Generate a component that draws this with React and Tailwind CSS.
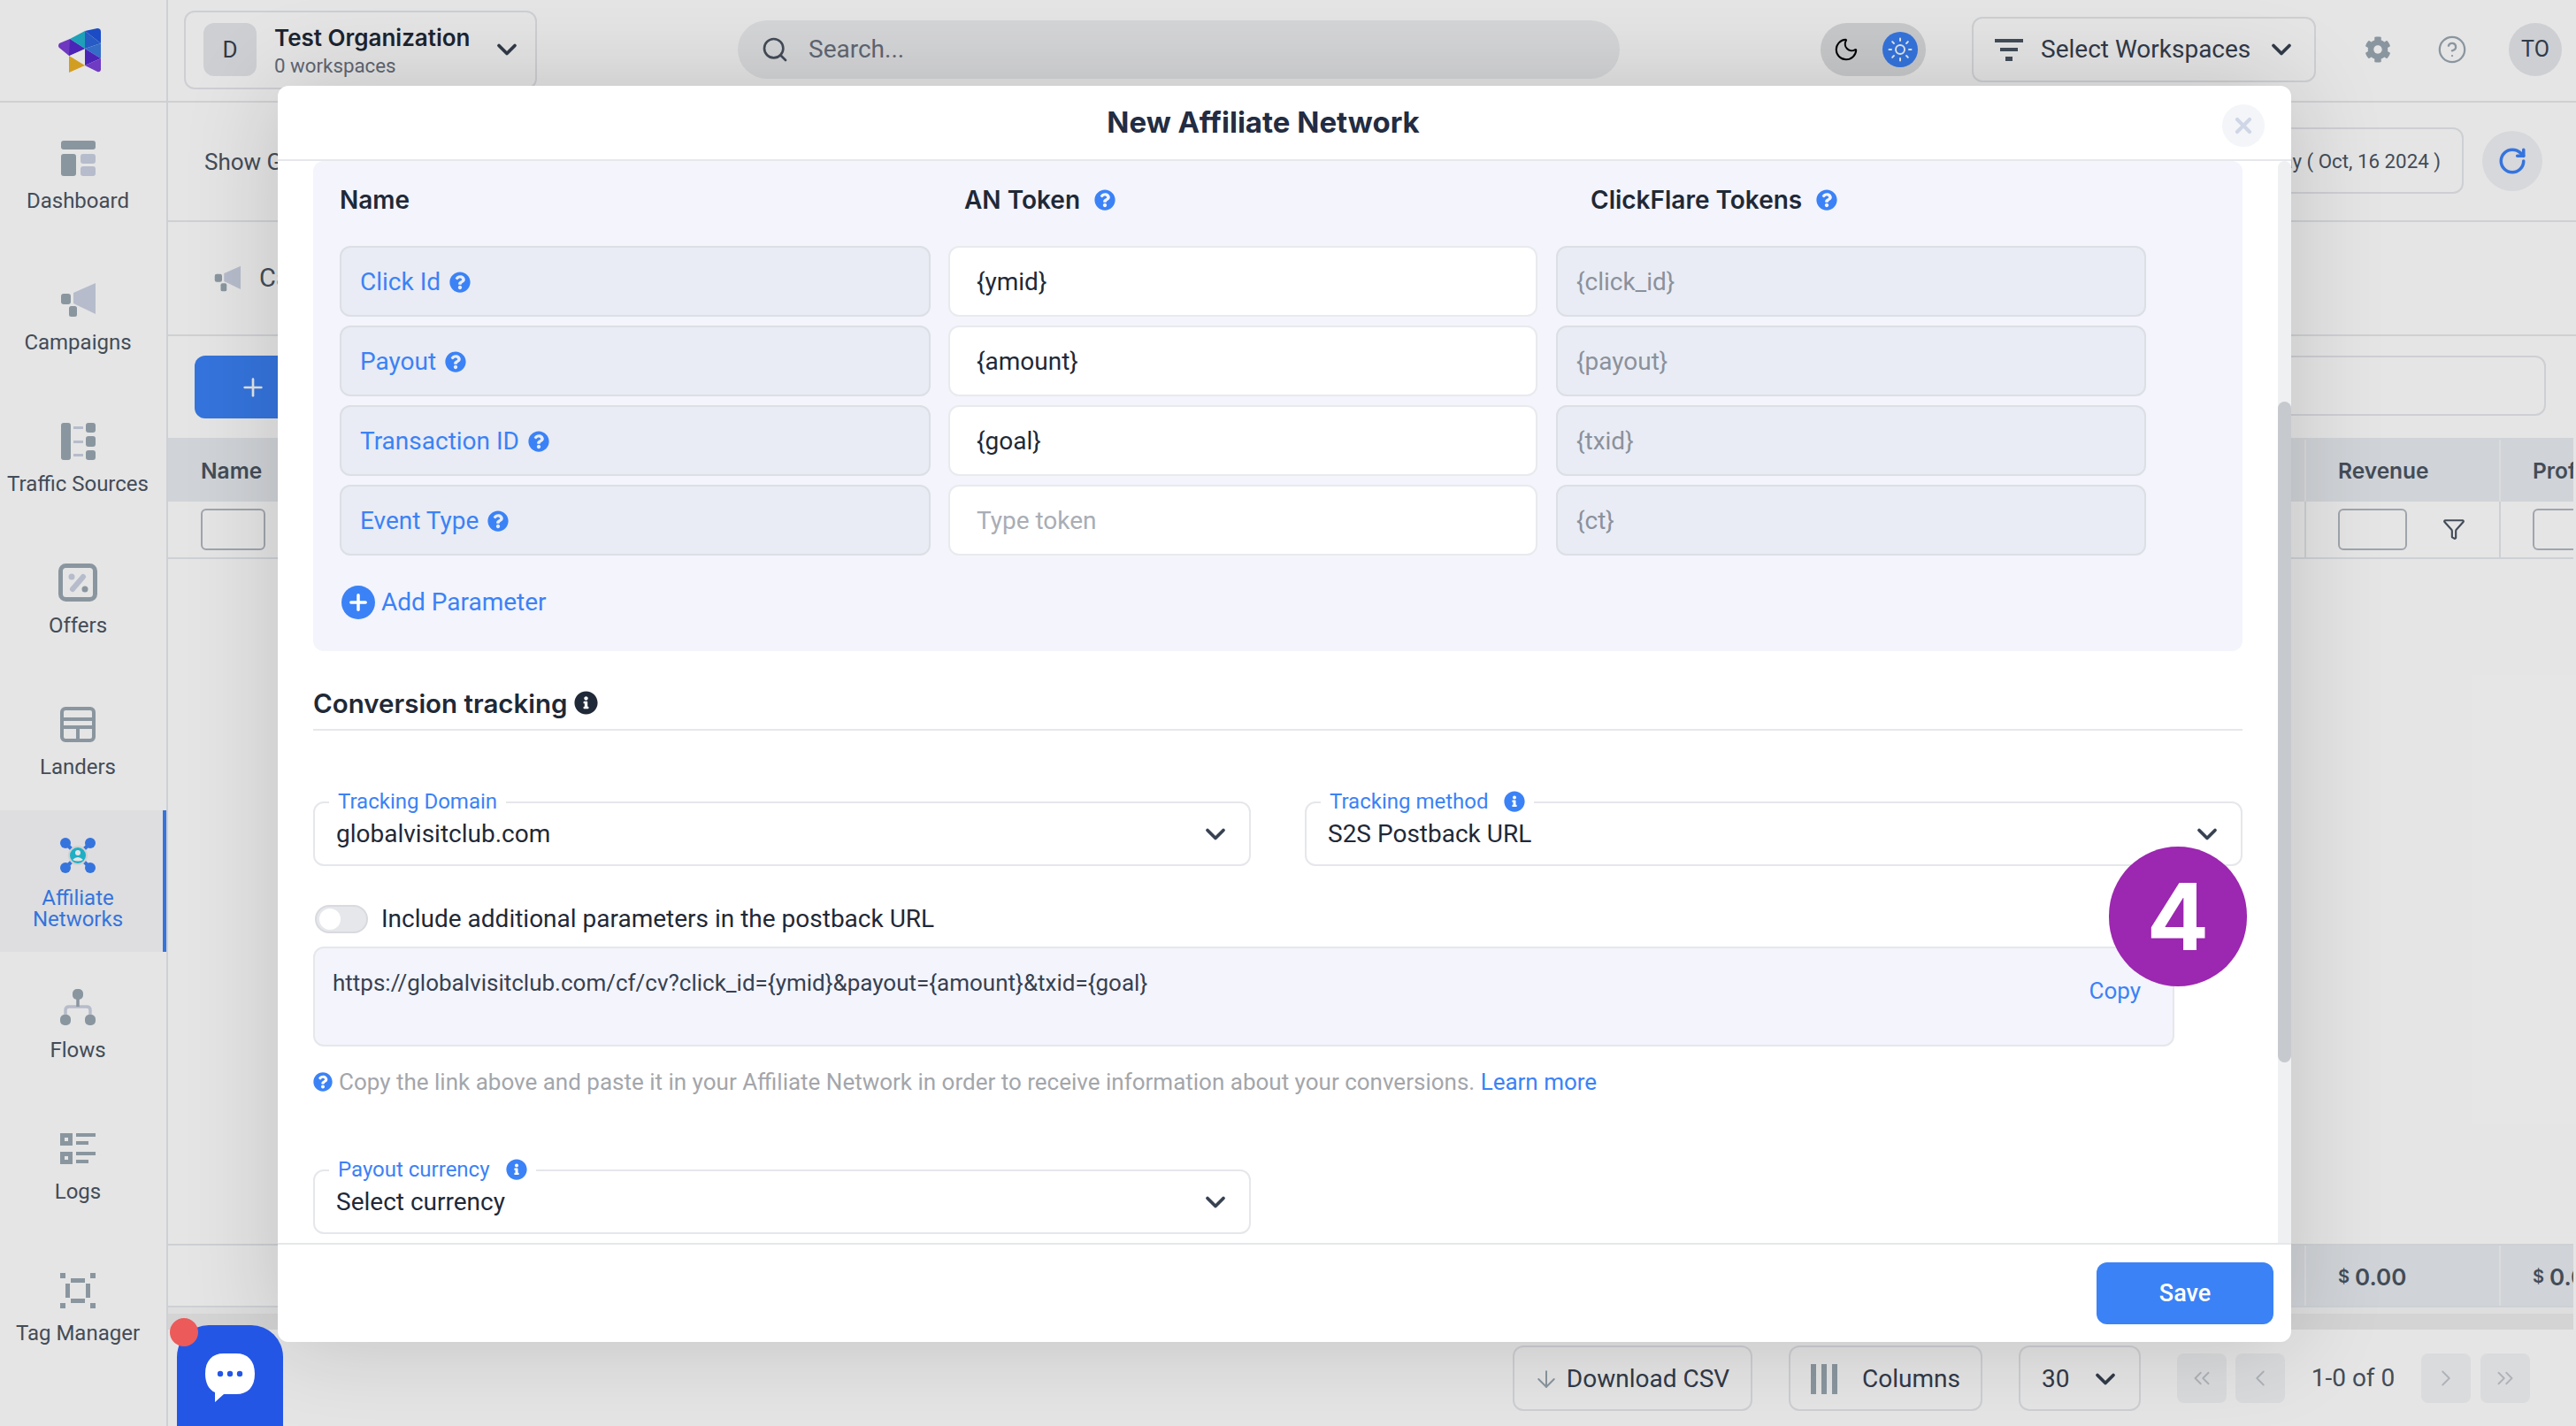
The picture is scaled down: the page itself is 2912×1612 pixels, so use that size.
import { ArrowDown, ChevronDown, ChevronLeft, ChevronRight, ChevronsLeft, ChevronsRight, CircleHelp, Funnel, Moon, Plus, RotateCw, Search, Sun, X } from 'lucide-react';
import { FaCog, FaInfoCircle, FaQuestionCircle } from 'react-icons/fa';

const dark = '#9aa7b2';
const light = '#cbd2e3';

const DashboardIcon = () => (
  <svg width="40" height="40" viewBox="0 0 40 40">
    <rect x="1" y="0" width="39" height="10" rx="3" fill={dark} />
    <rect x="1" y="15" width="17" height="25" rx="3" fill={dark} />
    <rect x="23" y="15" width="17" height="11" rx="3" fill={light} />
    <rect x="23" y="29" width="17" height="11" rx="3" fill={light} />
  </svg>
);

const CampaignsIcon = () => (
  <svg width="40" height="40" viewBox="0 0 40 40">
    <path d="M15 12 L40 1 V36 L15 24 Z" fill={light} />
    <rect x="1" y="13" width="11" height="12" rx="3" fill={dark} />
    <rect x="10" y="27" width="9" height="12" rx="2.5" fill={dark} />
  </svg>
);

const TrafficIcon = () => (
  <svg width="40" height="42" viewBox="0 0 40 42">
    <rect x="1" y="0" width="11" height="42" rx="3" fill={dark} />
    <rect x="29" y="0" width="11" height="11" rx="3" fill={dark} />
    <rect x="29" y="15" width="11" height="12" rx="3" fill={dark} />
    <rect x="29" y="31" width="11" height="11" rx="3" fill={dark} />
    <rect x="15" y="4" width="11" height="3" fill={light} />
    <rect x="15" y="20" width="11" height="3" fill={light} />
    <rect x="15" y="35" width="11" height="3" fill={light} />
  </svg>
);

const OffersIcon = () => (
  <svg width="44" height="44" viewBox="0 0 44 44">
    <rect x="2.5" y="2.5" width="39" height="38" rx="6" fill="none" stroke={dark} strokeWidth="5" />
    <circle cx="15" cy="15" r="3.5" fill={light} />
    <circle cx="30" cy="29" r="3.5" fill={dark} />
    <path d="M16 29 L28 15" stroke={light} strokeWidth="6" strokeLinecap="round" />
  </svg>
);

const LandersIcon = () => (
  <svg width="40" height="40" viewBox="0 0 40 40">
    <rect x="2" y="2" width="36" height="36" rx="4" fill="none" stroke={dark} strokeWidth="4" />
    <path d="M2 14 H38 M2 23 H38 M20 23 V38" stroke={dark} strokeWidth="4" />
  </svg>
);

const NetworksIcon = () => (
  <svg width="40" height="40" viewBox="0 0 40 40">
    <path d="M8 8 L32 32 M32 8 L8 32" stroke="#3b82f6" strokeWidth="4" />
    <circle cx="6" cy="6" r="6" fill="#3b82f6" />
    <circle cx="34" cy="6" r="6" fill="#3b82f6" />
    <circle cx="6" cy="34" r="6" fill="#3b82f6" />
    <circle cx="34" cy="34" r="6" fill="#3b82f6" />
    <circle cx="20" cy="20" r="10" fill="#22c3dc" stroke="#e8e8ea" strokeWidth="2" />
    <circle cx="20" cy="17" r="3" fill="#fff" />
    <path d="M14 25 Q20 19 26 25 Q20 28 14 25 Z" fill="#fff" />
  </svg>
);

const FlowsIcon = () => (
  <svg width="40" height="41" viewBox="0 0 40 41">
    <path d="M6 30 V24 Q6 20 10 20 H30 Q34 20 34 24 V30" fill="none" stroke={light} strokeWidth="3.5" />
    <path d="M20 8 V20" stroke={dark} strokeWidth="3.5" />
    <rect x="14" y="0" width="12" height="12" rx="5" fill={dark} />
    <rect x="0" y="29" width="12" height="12" rx="5" fill={dark} />
    <rect x="28" y="29" width="12" height="12" rx="5" fill={dark} />
  </svg>
);

const LogsIcon = () => (
  <svg width="40" height="35" viewBox="0 0 40 35">
    <path d="M0 0 H14 V14 H0 Z M5 5 V9 H9 V5 Z M0 21 H14 V35 H0 Z M5 26 V30 H9 V26 Z" fill={dark} fillRule="evenodd" />
    <path d="M18 0 H40 V4 H18 Z M18 9 H32 V13 H18 Z M18 21 H40 V25 H18 Z M18 30 H32 V34 H18 Z" fill={dark} />
  </svg>
);

const TagIcon = () => (
  <svg width="40" height="40" viewBox="0 0 40 40">
    <path d="M0 0 H6 V6 H0 Z M34 0 H40 V6 H34 Z M0 34 H6 V40 H0 Z M34 34 H40 V40 H34 Z" fill={dark} />
    <path d="M12 6 H28 V11 H12 Z M12 29 H28 V34 H12 Z M6 12 H11 V28 H6 Z M29 12 H34 V28 H29 Z" fill={dark} />
  </svg>
);

const Logo = () => (
  <svg width="48" height="50" viewBox="0 0 48 50">
    <path d="M1 17 Q-1 20 1 22 L12 31 L30 23 L13 12 Z" fill="#7c3fd6" />
    <path d="M13 12 L30 23 L12 31 Z" fill="#5427cc" />
    <path d="M13 12 L30 3 V23 Z" fill="#22b3cf" />
    <path d="M30 3 L44 0 Q48 0 48 4 V17 Z" fill="#1f55dc" />
    <path d="M30 3 L48 17 L30 23 Z" fill="#2b66dc" />
    <path d="M30 23 L48 17 V34 Z" fill="#3a7ade" />
    <path d="M30 23 L48 34 L30 42 Z" fill="#5427cc" />
    <path d="M48 34 V47 Q47 50 44 49 L30 42 Z" fill="#7c42d8" />
    <path d="M12 31 L30 42 L12 50 Z" fill="#eab026" />
  </svg>
);

const navItems = [
  { label: 'Dashboard', icon: <DashboardIcon /> },
  { label: 'Campaigns', icon: <CampaignsIcon /> },
  { label: 'Traffic Sources', icon: <TrafficIcon /> },
  { label: 'Offers', icon: <OffersIcon /> },
  { label: 'Landers', icon: <LandersIcon /> },
  { label: 'Affiliate Networks', icon: <NetworksIcon />, active: true },
  { label: 'Flows', icon: <FlowsIcon /> },
  { label: 'Logs', icon: <LogsIcon /> },
  { label: 'Tag Manager', icon: <TagIcon /> },
];

const params = [
  { name: 'Click Id', token: '{ymid}', cf: '{click_id}' },
  { name: 'Payout', token: '{amount}', cf: '{payout}' },
  { name: 'Transaction ID', token: '{goal}', cf: '{txid}' },
  { name: 'Event Type', token: '', cf: '{ct}' },
];

function NavItem({ item }) {
  return (
    <div
      className={`flex h-[160px] flex-col items-center justify-center gap-4 pt-[5px] ${
        item.active ? 'border-r-4 border-[#3b82f6] bg-[#f8f8fa] pr-2 text-[#3b82f6]' : 'pr-3 text-[#4b5563]'
      }`}
    >
      <div className="flex h-10 items-center justify-center">{item.icon}</div>
      <div className={`text-center text-[24px] leading-6 ${item.active ? 'w-[130px]' : ''}`}>{item.label}</div>
    </div>
  );
}

function ParamRow({ param }) {
  return (
    <div className="flex">
      <div className="flex h-20 w-[668px] items-center gap-[10px] rounded-xl border-2 border-[#dcdfe4] bg-[#e9ecf4] pl-[21px] pt-[1px] text-[28px] text-[#3b82f6]">
        {param.name}
        <FaQuestionCircle size={24} />
      </div>
      <div className="ml-5 flex h-20 w-[666px] items-center rounded-xl border-2 border-[#e8eaee] bg-white pl-[30px] pt-[1px] text-[28px] text-[#1f2937]">
        {param.token || <span className="text-[#a9adb5]">Type token</span>}
      </div>
      <div className="ml-[21px] flex h-20 w-[667px] items-center rounded-xl border-2 border-[#dcdfe4] bg-[#e9ecf4] pl-[21px] pt-[1px] text-[28px] text-[#8b919c]">
        {param.cf}
      </div>
    </div>
  );
}

function SelectField({ label, value, info, className = '' }) {
  return (
    <div className={`relative flex h-[73px] items-center justify-between rounded-xl border-2 border-[#e5e7eb] bg-white pl-6 pr-[20px] ${className}`}>
      <div className="absolute -top-[14px] left-[16px] flex h-6 items-center gap-[18px] bg-white px-[10px] text-[24px] leading-6 text-[#3b82f6]">
        {label}
        {info && <FaInfoCircle size={24} />}
      </div>
      <span className="text-[28px] text-[#1f2937]">{value}</span>
      <ChevronDown size={36} strokeWidth={2.5} className="text-[#374151]" />
    </div>
  );
}

function Pager({ children }) {
  return <div className="flex h-14 w-14 items-center justify-center rounded-lg bg-[#f3f4f6] text-[#c3c7cd]">{children}</div>;
}

function Modal() {
  return (
    <div className="absolute inset-0 bg-black/10 pl-[314px] pt-[97px]">
      <div className="flex h-[1420px] w-[2276px] flex-col overflow-hidden rounded-xl bg-white shadow-[0_0_110px_rgba(0,0,0,0.16)]">
        <div className="flex h-[85px] shrink-0 items-center justify-between border-b-2 border-[#e5e7eb] pr-[30px]">
          <div className="w-[2228px] pl-[30px] text-center font-['Inter',sans-serif] text-[33px] font-bold text-[#232c42]">New Affiliate Network</div>
          <div className="mt-[6px] flex h-12 w-12 shrink-0 items-center justify-center rounded-full bg-[#f3f5f9] text-[#cfd6e6]">
            <X size={28} strokeWidth={3.5} />
          </div>
        </div>

        <div className="flex h-[1223px] overflow-hidden">
          <div className="w-[2261px] pl-10 pr-10">
            <div className="rounded-xl bg-[#f3f4fc] pb-[36px] pl-[30px]">
              <div className="mb-[10px] flex h-[86px] items-center pt-[2px] font-['Inter',sans-serif] text-[28px] font-semibold text-[#1f2937]">
                <div className="w-[706px]">Name</div>
                <div className="flex w-[708px] items-center gap-[16px]">
                  AN Token
                  <FaQuestionCircle size={24} className="text-[#3b82f6]" />
                </div>
                <div className="flex items-center gap-[16px]">
                  ClickFlare Tokens
                  <FaQuestionCircle size={24} className="text-[#3b82f6]" />
                </div>
              </div>
              <div className="flex flex-col gap-[10px]">
                {params.map((param) => (
                  <ParamRow key={param.name} param={param} />
                ))}
              </div>
              <div className="mt-[34px] flex h-[38px] items-center gap-[7px] pl-[2px] text-[28px] text-[#3b82f6]">
                <div className="flex h-[38px] w-[38px] items-center justify-center rounded-full bg-[#3b82f6] text-white">
                  <Plus size={28} strokeWidth={3} />
                </div>
                Add Parameter
              </div>
            </div>

            <div className="mt-[34px] flex h-[56px] items-start gap-[7px] border-b-2 border-[#e5e7eb] pt-[3px] font-['Inter',sans-serif] text-[29.5px] font-semibold leading-[44px] text-[#1f2937]">
              Conversion tracking
              <FaInfoCircle size={27} className="mt-[8px]" />
            </div>

            <div className="mt-[80px] grid w-[2181px] grid-cols-2 gap-[61px]">
              <SelectField label="Tracking Domain" value="globalvisitclub.com" />
              <SelectField label="Tracking method" value="S2S Postback URL" info />
            </div>

            <div className="mt-[43px] flex h-8 items-center gap-[15px] pl-[2px] pt-[1px] text-[28px] text-[#1f2937]">
              <div className="flex h-8 w-[60px] items-center rounded-full border-2 border-[#d8dadf] bg-[#e5e7eb] pl-[3px]">
                <div className="h-6 w-6 rounded-full bg-white" />
              </div>
              Include additional parameters in the postback URL
            </div>

            <div className="mt-4 flex h-[113px] w-[2104px] justify-between rounded-xl border-2 border-[#e5e7eb] bg-[#f3f4fc] pl-[20px] pr-[36px] text-[26px]">
              <span className="pt-[20px] text-[#374151]">https://globalvisitclub.com/cf/cv?click_id={'{ymid}'}&amp;payout={'{amount}'}&amp;txid={'{goal}'}</span>
              <span className="pt-[29px] text-[#3b82f6]">Copy</span>
            </div>

            <div className="mt-[25px] flex h-[30px] items-center gap-[7px] text-[26px] text-[#a3a6ab]">
              <FaQuestionCircle size={22} className="text-[#3b82f6]" />
              <span>
                Copy the link above and paste it in your Affiliate Network in order to receive information about your conversions.{' '}
                <span className="text-[#3b82f6]">Learn more</span>
              </span>
            </div>

            <SelectField className="mt-[84px] w-[1060px]" label="Payout currency" value="Select currency" info />
          </div>
          <div className="w-[15px] rounded-t-lg bg-[#eef0f2] pt-[272px]">
            <div className="h-[747px] rounded-full bg-[#c6c9ce]" />
          </div>
        </div>

        <div className="flex h-[112px] shrink-0 items-center justify-end border-t-2 border-[#e5e7eb] pr-[20px]">
          <div className="flex h-[70px] w-[200px] items-center justify-center rounded-xl bg-[#3b82f6] text-[27px] font-medium text-white">Save</div>
        </div>
      </div>
    </div>
  );
}

export default function App() {
  return (
    <div className="relative flex h-[1612px] w-[2912px] overflow-hidden bg-white font-['Roboto',sans-serif] text-[#1f2937]">
      <aside className="w-[190px] shrink-0 border-r-2 border-[#e5e8ec]">
        <div className="flex h-[116px] items-center justify-center border-b-2 border-[#e5e8ec] pr-[8px]">
          <Logo />
        </div>
        {navItems.map((item) => (
          <NavItem key={item.label} item={item} />
        ))}
      </aside>

      <main className="flex min-w-0 flex-1 flex-col">
        <header className="flex h-[116px] shrink-0 items-center border-b-2 border-[#e5e8ec] pb-[2px] pl-[18px] pr-[16px]">
          <div className="flex h-[89px] w-[399px] items-center rounded-xl border-2 border-[#e5e7eb] pl-[20px]">
            <div className="flex h-[60px] w-[60px] items-center justify-center rounded-xl bg-[#e5e7eb] text-[26px] text-[#374151]">D</div>
            <div className="ml-[20px] w-[245px] pt-[1px]">
              <div className="font-['Inter',sans-serif] text-[26px] font-semibold leading-[34px] text-[#1f2937]">Test Organization</div>
              <div className="text-[22.3px] leading-[28px] text-[#6b7280]">0 workspaces</div>
            </div>
            <ChevronDown size={36} strokeWidth={2.5} className="text-[#374151]" />
          </div>
          <div className="ml-[227px] flex h-[66px] w-[997px] items-center gap-[22px] rounded-full bg-[#eeeff1] pl-[26px] text-[28px] text-[#6b7280]">
            <Search size={32} strokeWidth={2} className="text-[#4b5563]" />
            Search...
          </div>
          <div className="ml-[227px] flex h-[60px] w-[119px] items-center gap-[26px] rounded-full bg-[#dfe0e3] pl-[14px]">
            <Moon size={30} strokeWidth={1.6} className="text-black" />
            <div className="flex h-10 w-10 items-center justify-center rounded-full bg-[#3b82f6] text-white">
              <Sun size={30} strokeWidth={1.6} />
            </div>
          </div>
          <div className="ml-[52px] flex h-[74px] w-[389px] items-center rounded-xl border-2 border-[#e5e7eb] pl-[24px] text-[28px] text-[#374151]">
            <svg width="32" height="28" viewBox="0 0 32 28" className="mr-[20px]">
              <path d="M0 2 H32 V6 H0 Z M6 12 H26 V16 H6 Z M12 22 H20 V27 H12 Z" fill="#4b5563" />
            </svg>
            Select Workspaces
            <ChevronDown size={36} strokeWidth={2.5} className="ml-[17px]" />
          </div>
          <FaCog size={30} className="ml-[55px] text-[#9aa7b2]" />
          <CircleHelp size={34} strokeWidth={1.6} className="ml-[52px] text-[#9aa7b2]" />
          <div className="ml-[47px] flex h-[60px] w-[60px] items-center justify-center rounded-full bg-[#e5e7eb] text-[25px] text-[#374151]">TO</div>
        </header>

        <div className="flex h-[135px] shrink-0 items-center justify-between border-b-2 border-[#e5e8ec] pb-[2px] pl-[41px] pr-[38px] text-[26px] text-[#4b5563]">
          <span className="pt-[4px]">Show Groups</span>
          <div className="flex items-center gap-[21px]">
            <div className="flex h-[75px] w-[480px] items-center justify-end rounded-xl border-2 border-[#e5e7eb] pr-[24px] pt-[3px] text-[22.3px] text-[#4b5563]">Today ( Oct, 16 2024 )</div>
            <div className="flex h-[68px] w-[68px] items-center justify-center rounded-full bg-[#f0f1f5] text-[#3b82f6]">
              <RotateCw size={34} strokeWidth={2.5} />
            </div>
          </div>
        </div>

        <div className="flex h-[129px] shrink-0 items-center gap-[20px] border-b-2 border-[#e5e8ec] pl-[51px] text-[29px] text-[#4b5563]">
          <svg width="32" height="30" viewBox="0 0 40 40">
            <path d="M15 12 L40 1 V36 L15 24 Z" fill={light} />
            <rect x="1" y="13" width="11" height="12" rx="3" fill={dark} />
            <rect x="10" y="27" width="9" height="12" rx="2.5" fill={dark} />
          </svg>
          Campaigns
        </div>

        <div className="flex h-[115px] shrink-0 items-start justify-between pl-[30px] pr-[34px] pt-[22px]">
          <div className="flex h-[71px] w-[160px] items-center rounded-xl bg-[#3b82f6] pl-[50px] text-white">
            <Plus size={32} strokeWidth={2} />
          </div>
          <div className="h-[68px] w-[600px] rounded-xl border-2 border-[#e5e7eb]" />
        </div>

        <div className="flex min-h-0 flex-1 flex-col pr-[3px]">
          <div className="flex h-[72px] shrink-0 bg-[#e8ebf0] pt-[2px] font-['Inter',sans-serif] text-[24.5px] font-semibold text-[#4b5563]">
            <div className="flex flex-1 items-center pl-[37px]">Name</div>
            <div className="flex w-[220px] items-center border-l-2 border-[#f3f4f6] pl-[36px]">Revenue</div>
            <div className="flex w-[84px] items-center overflow-hidden border-l-2 border-[#f3f4f6] pl-[36px]">Profit</div>
          </div>
          <div className="flex h-[65px] shrink-0 border-b-2 border-[#e5e8ec]">
            <div className="flex-1 pl-[37px] pt-[8px]">
              <div className="h-[47px] w-[73px] rounded-md border-2 border-[#b3b8c0]" />
            </div>
            <div className="flex w-[220px] items-start gap-[40px] border-l-2 border-[#e5e8ec] pl-[36px] pt-[8px]">
              <div className="h-[47px] w-[78px] rounded-md border-2 border-[#b3b8c0]" />
              <Funnel size={26} strokeWidth={2} className="mt-[10px] text-[#4b5563]" />
            </div>
            <div className="w-[84px] overflow-hidden border-l-2 border-[#e5e8ec] pl-[36px] pt-[8px]">
              <div className="h-[47px] w-[78px] rounded-md border-2 border-[#b3b8c0]" />
            </div>
          </div>
          <div className="flex-1" />
          <div className="flex h-[72px] shrink-0 border-y-2 border-[#e5e8ec] font-['Inter',sans-serif] text-[26px] font-semibold text-[#4b5563]">
            <div className="w-[400px]" />
            <div className="flex flex-1 items-center justify-end bg-[#e8ebf0]" />
            <div className="flex w-[220px] items-center border-l-2 border-[#f3f4f6] bg-[#e8ebf0] pl-[36px] pt-[2px]">
              <span className="mr-[6px] text-[20px]">$</span>0.00
            </div>
            <div className="flex w-[84px] items-center overflow-hidden border-l-2 border-[#f3f4f6] bg-[#e8ebf0] pl-[36px] pt-[2px]">
              <span className="mr-[6px] text-[20px]">$</span>0.00
            </div>
          </div>
          <div className="h-[7px] shrink-0 bg-[#f8f8f8]" />
          <div className="h-[18px] shrink-0 bg-[#ececec]" />
        </div>

        <div className="flex h-[109px] shrink-0 items-center justify-end pr-[52px] text-[28px] text-[#374151]">
          <div className="flex h-[74px] w-[271px] items-center justify-center gap-[8px] rounded-xl border-2 border-[#e5e7eb] pr-[3px] pt-[2px]">
            <ArrowDown size={30} strokeWidth={1.6} className="text-[#9aa7b2]" />
            Download CSV
          </div>
          <div className="ml-[41px] flex h-[74px] w-[219px] items-center justify-center gap-[28px] rounded-xl border-2 border-[#e5e7eb] pt-[2px]">
            <div className="flex gap-[6px]">
              <div className="h-[34px] w-[6px] bg-[#9aa7b2]" />
              <div className="h-[34px] w-[6px] bg-[#9aa7b2]" />
              <div className="h-[34px] w-[6px] bg-[#9aa7b2]" />
            </div>
            Columns
          </div>
          <div className="ml-[41px] flex h-[74px] w-[138px] items-center justify-between rounded-xl border-2 border-[#e5e7eb] pl-[24px] pr-[20px] pt-[2px]">
            30
            <ChevronDown size={36} strokeWidth={2.5} />
          </div>
          <div className="ml-[41px] flex gap-[10px]">
            <Pager><ChevronsLeft size={30} strokeWidth={1.5} /></Pager>
            <Pager><ChevronLeft size={30} strokeWidth={1.5} /></Pager>
          </div>
          <div className="w-[154px] text-center text-[28px] text-[#4b5563]">1-0 of 0</div>
          <div className="flex gap-[11px]">
            <Pager><ChevronRight size={30} strokeWidth={1.5} /></Pager>
            <Pager><ChevronsRight size={30} strokeWidth={1.5} /></Pager>
          </div>
        </div>
      </main>

      <Modal />

      {/* step badge over the modal */}
      <div className="absolute left-[2384px] top-[957px] flex h-[158px] w-[156px] items-center justify-center rounded-full bg-[#9c27b0] font-['Inter',sans-serif] text-[104px] font-bold text-white">4</div>

      {/* chat widget */}
      <div className="absolute left-[200px] top-[1498px] flex h-[114px] w-[120px] items-start justify-center rounded-t-[36px] bg-[#2456e6] pt-[32px]">
        <svg width="58" height="56" viewBox="0 0 58 56">
          <path d="M22 0 H36 C49 0 57 8 57 23 C57 38 49 46 36 46 H22 L12 55 V44 C5 41 1 33 1 23 C1 8 9 0 22 0 Z" fill="#fff" />
          <circle cx="18" cy="23" r="3.2" fill="#2456e6" />
          <circle cx="29" cy="23" r="3.2" fill="#2456e6" />
          <circle cx="40" cy="23" r="3.2" fill="#2456e6" />
        </svg>
      </div>
      <div className="absolute left-[192px] top-[1490px] h-8 w-8 rounded-full bg-[#ec5a5a]" />
    </div>
  );
}
